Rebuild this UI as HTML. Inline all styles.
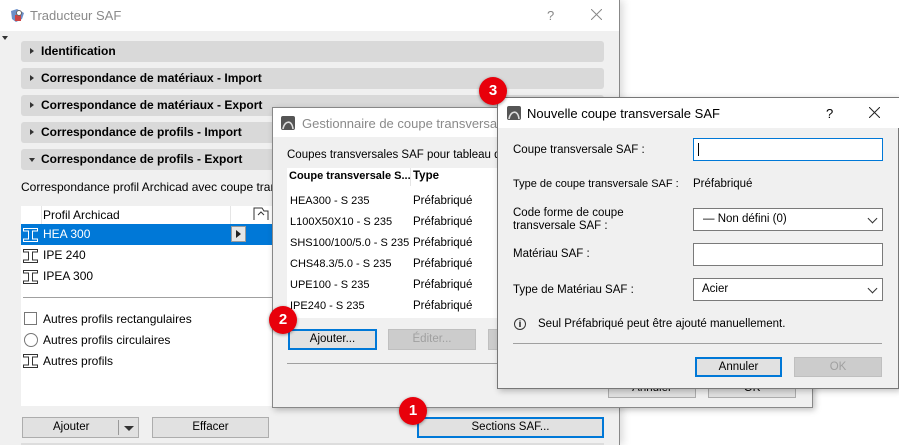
<!DOCTYPE html>
<html><head><meta charset="utf-8"><style>
*{box-sizing:border-box;margin:0;padding:0}
body{width:899px;height:445px;overflow:hidden;background:#fff;position:relative;font-family:"Liberation Sans",sans-serif;font-size:11.5px;color:#000}
.a{position:absolute;white-space:nowrap}
.bar{position:absolute;left:21px;width:583px;height:21px;background:#d9d9d9;border-radius:3px;font-weight:bold;line-height:21px;padding-left:20px;font-size:12px}
.bar:before{content:"";position:absolute;left:9px;top:7px;border-left:4px solid #333;border-top:3.5px solid transparent;border-bottom:3.5px solid transparent}
.bar.open:before{left:8px;top:9px;border-top:4px solid #333;border-left:3.5px solid transparent;border-right:3.5px solid transparent;border-bottom:0}
.btn{position:absolute;background:#e1e1e1;border:1px solid #adadad;text-align:center;line-height:18px}
.btn.f{border:2px solid #0078d7;line-height:16px}
.btn.d{color:#a0a0a0;background:#ccc;border-color:#bfbfbf}
.badge{position:absolute;width:28px;height:28px;border-radius:50%;background:#e8000b;color:#fff;font-weight:bold;font-size:15px;text-align:center;line-height:28px;box-shadow:0 1px 3px rgba(0,0,0,.4)}
.inp{position:absolute;background:#fff;border:1px solid #7a7a7a}
.chev{position:absolute;right:6px;top:6px;width:7px;height:7px;border-right:1px solid #333;border-bottom:1px solid #333;transform:rotate(45deg)}
</style></head><body>
<svg width="0" height="0" style="position:absolute"><defs><symbol id="ib" viewBox="0 0 15 14"><path d="M0.5 0.5h14v2.5h-5v8h5v2.5h-14v-2.5h5v-8h-5z" fill="none" stroke="currentColor"/></symbol></defs></svg>
<!-- main window -->
<div class="a" style="left:0;top:0;width:620px;height:445px;background:#f0f0f0;border-right:1px solid #888;box-shadow:3px 0 8px rgba(0,0,0,.15)"></div>
<div class="a" style="left:0;top:0;width:619px;height:31px;background:#fff"></div>
<svg class="a" style="left:9px;top:7px" width="18" height="18"><path d="M2 4l6-2 7 4-2 6-6 3-4-3z" fill="#6b8fc9"/><path d="M6 8h6v6H6z" fill="#c44"/><circle cx="10" cy="6" r="2.5" fill="#fff" stroke="#666"/></svg>
<div class="a" style="left:30px;top:8px;font-size:13px;color:#8a8a8a">Traducteur SAF</div>
<div class="a" style="left:547px;top:8px;font-size:13px;color:#888">?</div>
<svg class="a" style="left:591px;top:9px" width="11" height="11"><path d="M0 0L11 11M11 0L0 11" stroke="#888"/></svg>
<div class="a" style="left:2px;top:36px;border-top:4px solid #333;border-left:3px solid transparent;border-right:3px solid transparent"></div>
<div class="bar" style="top:41px">Identification</div>
<div class="bar" style="top:68px">Correspondance de matériaux - Import</div>
<div class="bar" style="top:95px">Correspondance de matériaux - Export</div>
<div class="bar" style="top:122px">Correspondance de profils - Import</div>
<div class="bar open" style="top:149px">Correspondance de profils - Export</div>
<div class="a" style="left:21px;top:180px;font-size:12px">Correspondance profil Archicad avec coupe transversale SAF</div>
<div class="a" style="left:21px;top:206px;width:583px;height:200px;background:#fff"></div>
<div class="a" style="left:41px;top:206px;width:1px;height:18px;background:#e5e5e5"></div>
<div class="a" style="left:43px;top:208px;font-size:12px">Profil Archicad</div>
<div class="a" style="left:230px;top:206px;width:1px;height:18px;background:#e5e5e5"></div>
<svg class="a" style="left:253px;top:207px" width="16" height="14"><path d="M1 13V1h8l2 3h4v9" fill="none" stroke="#333"/><path d="M5 8l3-3 3 3" fill="none" stroke="#333"/></svg>
<div class="a" style="left:21px;top:224px;width:583px;height:21px;background:#0078d7"></div>
<svg class="a" style="left:23px;top:228px;color:#fff" width="15" height="14"><use href="#ib"/></svg>
<div class="a" style="left:43px;top:227px;color:#fff;font-size:12px">HEA 300</div>
<div class="a" style="left:231px;top:226px;width:15px;height:16px;background:#e6e6e6;border:1px solid #999"></div>
<div class="a" style="left:236px;top:230px;border-left:5px solid #222;border-top:4px solid transparent;border-bottom:4px solid transparent"></div>
<svg class="a" style="left:23px;top:249px;color:#333" width="15" height="14"><use href="#ib"/></svg><div class="a" style="left:43px;top:248px;font-size:12px">IPE 240</div>
<svg class="a" style="left:23px;top:270px;color:#333" width="15" height="14"><use href="#ib"/></svg><div class="a" style="left:43px;top:269px;font-size:12px">IPEA 300</div>
<div class="a" style="left:23px;top:297px;width:580px;height:1px;background:#a0a0a0"></div>
<div class="a" style="left:24px;top:312px;width:13px;height:13px;border:1px solid #777;background:#fff"></div>
<div class="a" style="left:43px;top:312px;font-size:12px">Autres profils rectangulaires</div>
<div class="a" style="left:24px;top:333px;width:14px;height:14px;border:1px solid #777;border-radius:50%"></div>
<div class="a" style="left:43px;top:333px;font-size:12px">Autres profils circulaires</div>
<svg class="a" style="left:23px;top:354px;color:#333" width="15" height="14"><use href="#ib"/></svg><div class="a" style="left:43px;top:354px;font-size:12px">Autres profils</div>
<div class="btn" style="left:22px;top:417px;width:117px;height:21px;text-align:left;padding-left:30px">Ajouter</div>
<div class="a" style="left:118px;top:420px;width:1px;height:15px;background:#999"></div>
<div class="a" style="left:124px;top:426px;border-top:5px solid #333;border-left:5px solid transparent;border-right:5px solid transparent"></div>
<div class="btn" style="left:152px;top:417px;width:117px;height:21px">Effacer</div>
<div class="btn f" style="left:417px;top:417px;width:187px;height:21px">Sections SAF...</div>
<div class="a" style="left:21px;top:443px;width:583px;height:2px;background:#ddd"></div>
<!-- gestionnaire -->
<div class="a" style="left:272px;top:107px;width:541px;height:301px;background:#f0f0f0;border:1px solid #888;box-shadow:2px 2px 6px rgba(0,0,0,.25)"></div>
<div class="a" style="left:273px;top:108px;width:539px;height:29px;background:#fff"></div>
<svg class="a" style="left:281px;top:116px" width="14" height="14"><rect width="14" height="14" rx="2" fill="#555"/><path d="M2 13C3 5 11 3 12 13" fill="none" stroke="#ddd" stroke-width="1.6"/></svg>
<div class="a" style="left:302px;top:116px;font-size:13px;color:#8a8a8a">Gestionnaire de coupe transversale SAF</div>
<div class="a" style="left:287px;top:149px">Coupes transversales SAF pour tableau de correspondance</div>
<div class="a" style="left:287px;top:168px;width:213px;height:150px;background:#fff"></div>
<div class="a" style="left:289px;top:170px;font-weight:bold;font-size:11px">Coupe transversale S...</div>
<div class="a" style="left:410px;top:168px;width:1px;height:18px;background:#e5e5e5"></div>
<div class="a" style="left:413px;top:170px;font-weight:bold">Type</div>
<div class="a" style="left:290px;top:191px;line-height:21px;font-size:11px;width:120px;overflow:hidden">HEA300 - S 235<br>L100X50X10 - S 235<br>SHS100/100/5.0 - S 235<br>CHS48.3/5.0 - S 235<br>UPE100 - S 235<br>IPE240 - S 235</div>
<div class="a" style="left:413px;top:191px;line-height:21px">Préfabriqué<br>Préfabriqué<br>Préfabriqué<br>Préfabriqué<br>Préfabriqué<br>Préfabriqué</div>
<div class="btn f" style="left:288px;top:329px;width:89px;height:21px">Ajouter...</div>
<div class="btn d" style="left:388px;top:329px;width:88px;height:21px">Éditer...</div>
<div class="btn d" style="left:488px;top:329px;width:30px;height:21px"></div>
<div class="a" style="left:287px;top:363px;width:510px;height:1px;background:#a0a0a0"></div>
<div class="btn" style="left:608px;top:378px;width:88px;height:20px">Annuler</div>
<div class="btn" style="left:708px;top:378px;width:88px;height:20px">OK</div>
<!-- nouvelle -->
<div class="a" style="left:497px;top:97px;width:402px;height:292px;background:#f0f0f0;border:1px solid #777;box-shadow:2px 2px 6px rgba(0,0,0,.25)"></div>
<div class="a" style="left:498px;top:98px;width:401px;height:30px;background:#fff"></div>
<svg class="a" style="left:507px;top:106px" width="14" height="14"><rect width="14" height="14" rx="2" fill="#555"/><path d="M2 13C3 5 11 3 12 13" fill="none" stroke="#ddd" stroke-width="1.6"/></svg>
<div class="a" style="left:527px;top:106px;font-size:13px">Nouvelle coupe transversale SAF</div>
<div class="a" style="left:826px;top:106px;font-size:13px">?</div>
<svg class="a" style="left:869px;top:107px" width="11" height="11"><path d="M0 0L11 11M11 0L0 11" stroke="#222"/></svg>
<div class="a" style="left:513px;top:144px">Coupe transversale SAF :</div>
<div class="inp" style="left:693px;top:138px;width:190px;height:23px;border-color:#0078d7"></div>
<div class="a" style="left:698px;top:143px;width:1px;height:13px;background:#000"></div>
<div class="a" style="left:513px;top:178px;font-size:11px">Type de coupe transversale SAF :</div>
<div class="a" style="left:693px;top:178px">Préfabriqué</div>
<div class="a" style="left:513px;top:207px;line-height:13px">Code forme de coupe<br>transversale SAF :</div>
<div class="inp" style="left:693px;top:208px;width:190px;height:23px"><div class="a" style="left:9px;top:4px">— Non défini (0)</div><div class="chev"></div></div>
<div class="a" style="left:513px;top:248px">Matériau SAF :</div>
<div class="inp" style="left:693px;top:243px;width:190px;height:23px"></div>
<div class="a" style="left:513px;top:284px">Type de Matériau SAF :</div>
<div class="inp" style="left:693px;top:278px;width:190px;height:23px"><div class="a" style="left:8px;top:4px">Acier</div><div class="chev"></div></div>
<div class="a" style="left:514px;top:318px;width:12px;height:12px;border:1px solid #333;border-radius:50%;font-size:9px;text-align:center;line-height:10px;font-weight:bold">i</div>
<div class="a" style="left:538px;top:318px">Seul Préfabriqué peut être ajouté manuellement.</div>
<div class="a" style="left:513px;top:343px;width:369px;height:1px;background:#a0a0a0"></div>
<div class="btn f" style="left:695px;top:357px;width:87px;height:20px">Annuler</div>
<div class="btn d" style="left:794px;top:357px;width:88px;height:20px">OK</div>
<!-- badges -->
<div class="badge" style="left:399px;top:397px">1</div>
<div class="badge" style="left:269px;top:306px">2</div>
<div class="badge" style="left:479px;top:77px">3</div>
</body></html>
